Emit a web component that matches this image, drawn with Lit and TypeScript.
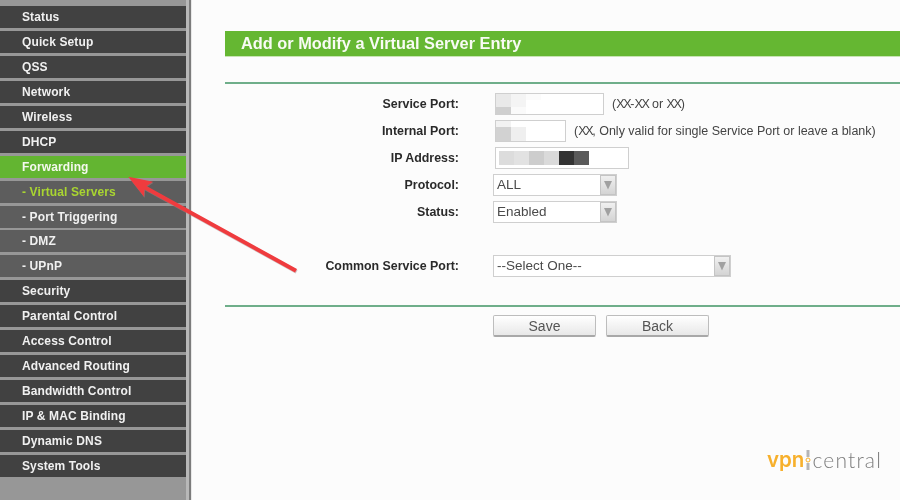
import { LitElement, html, css } from "lit";
import { customElement } from "lit/decorators.js";

type Item = { label: string; kind?: "active" | "sub" | "subactive" };
const MENU: Item[] = [
  { label: "Status" }, { label: "Quick Setup" }, { label: "QSS" }, { label: "Network" },
  { label: "Wireless" }, { label: "DHCP" }, { label: "Forwarding", kind: "active" },
  { label: "- Virtual Servers", kind: "subactive" }, { label: "- Port Triggering", kind: "sub" },
  { label: "- DMZ", kind: "sub" }, { label: "- UPnP", kind: "sub" }, { label: "Security" },
  { label: "Parental Control" }, { label: "Access Control" }, { label: "Advanced Routing" },
  { label: "Bandwidth Control" }, { label: "IP & MAC Binding" }, { label: "Dynamic DNS" },
  { label: "System Tools" },
];

const arrowBtn = html`<span class="drop"><svg width="10" height="10" viewBox="0 0 10 10"><path d="M1 1h8L5 9.500z" fill="#a0a0a0"/></svg></span>`;
const xx = html`<span class="xx">XX</span>`;

@customElement("app-root")
export class AppRoot extends LitElement {
  static styles = css`
    :host { display: block; width: 900px; height: 500px; overflow: hidden; position: relative;
      font-family: "Liberation Sans", Arial, sans-serif; background: #fcfcfc; filter: blur(0.4px); }
    .page { display: flex; height: 500px; }
    .side { width: 186px; flex: none; background: #979797; padding-top: 6px; box-sizing: border-box;
      display: flex; flex-direction: column; gap: 2.94px; }
    .stripe { width: 6px; flex: none; background: linear-gradient(90deg, #b8b8b8 0 3px, #7c7c7c 3px 5px, #e8e8e8 5px 6px); }
    .item { height: 22px; flex: none; background: #414141; color: #f0f0f0; font-size: 12px; font-weight: 700;
      line-height: 22px; padding-left: 22px; white-space: nowrap; letter-spacing: 0.12px; }
    .active { background: #63b531; color: #f4f8ee; }
    .sub { background: #5d5d5d; }
    .subactive { background: #5d5d5d; color: #a9d531; }
    .main { flex: 1; padding: 31px 0 0 33px; min-width: 0; }
    .title { height: 25px; background: #65b732; color: #f8fbf4; font-size: 16.350px; font-weight: 700; line-height: 24px;
      padding-left: 16px; box-shadow: 0 1px 0 #c8e4b4; }
    .rule { height: 2px; background: #6fae8a; }
    .r1 { margin-top: 26px; }
    .form { display: flex; flex-direction: column; margin-top: 6px; }
    .row { display: grid; grid-template-columns: 234px 1fr; column-gap: 36px; align-items: center; height: 27px; }
    .row.common { margin-top: 27px; }
    .lbl { font-size: 12.400px; font-weight: 700; color: #2a2a2a; text-align: right; }
    .ctl { display: flex; align-items: center; gap: 8px; }
    .box { height: 22px; box-sizing: border-box; background: #fff; border: 1px solid #cfcfcf; display: flex; flex: none; position: relative; overflow: hidden; }
    .hint { font-size: 12.500px; color: #444; white-space: nowrap; }
    .xx { letter-spacing: -1.300px; }
    .blur { display: flex; flex-direction: column; }
    .cell { width: 15px; height: 7px; }
    .sel { height: 22px; box-sizing: border-box; background: #fff; border: 1px solid #cfcfcf; display: flex; align-items: center;
      justify-content: space-between; padding: 0 0 0 3px; font-size: 13.500px; color: #4a4a4a; flex: none; margin-left: -2px; }
    .drop { width: 16px; height: 20px; border: 1px solid #c4c4c4; background: linear-gradient(#f0f0f0, #d4d4d4); box-sizing: border-box;
      display: flex; align-items: center; justify-content: center; }
    .btns { display: flex; gap: 10px; margin: 8px 0 0 268px; }
    .btn { width: 103px; height: 22px; box-sizing: border-box; border: 1px solid #bdbdbd; border-bottom: 2px solid #a8a8a8; border-radius: 2px;
      background: linear-gradient(#fff, #e8e8e8); font-size: 14px; color: #555; display: flex; align-items: center; justify-content: center; }
    .r2 { margin-top: 26px; }
    .arrow { position: absolute; left: 120px; top: 170px; }
    .logo { position: absolute; left: 767px; top: 448px; display: flex; align-items: center; line-height: 24px; }
    .vpn { color: #f7b02c; font-weight: 600; font-family: Inter, sans-serif; font-size: 20.500px; }
    .central { color: #7d7d7d; font-family: Lato, sans-serif; font-weight: 300; font-size: 21px; letter-spacing: 1.200px; }
    .mark { margin: 0; }
  `;

  private patch(cells: string[][]) {
    return html`<div style="display:flex">${cells.map(
      (col) => html`<div class="blur">${col.map((c) => html`<div class="cell" style="background:${c}"></div>`)}</div>`
    )}</div>`;
  }

  render() {
    return html`
      <div class="page">
        <nav class="side">
          ${MENU.map((m) => html`<div class="item ${m.kind ?? ""}">${m.label}</div>`)}
        </nav>
        <div class="stripe"></div>
        <main class="main">
          <div class="title">Add or Modify a Virtual Server Entry</div>
          <div class="rule r1"></div>
          <div class="form">
            <div class="row"><div class="lbl">Service Port:</div><div class="ctl">
              <div class="box" style="width:109px">${this.patch([["#e9e9e9", "#e9e9e9", "#cfcfcf"], ["#f4f4f4", "#f4f4f4", "#fafafa"], ["#fbfbfb", "#fff", "#fff"]])}</div>
              <span class="hint">(${xx}-${xx} or ${xx})</span></div></div>
            <div class="row"><div class="lbl">Internal Port:</div><div class="ctl">
              <div class="box" style="width:71px">${this.patch([["#f2f2f2", "#d2d2d2", "#d2d2d2"], ["#fff", "#efefef", "#efefef"]])}</div>
              <span class="hint">(${xx}, Only valid for single Service Port or leave a blank)</span></div></div>
            <div class="row"><div class="lbl">IP Address:</div><div class="ctl">
              <div class="box" style="width:134px;align-items:center;padding-left:3px">${this.patch([["#dcdcdc", "#dcdcdc"], ["#e2e2e2", "#e2e2e2"], ["#cdcdcd", "#cdcdcd"], ["#dadada", "#dadada"], ["#333", "#333"], ["#5a5a5a", "#5a5a5a"]])}</div></div></div>
            <div class="row"><div class="lbl">Protocol:</div><div class="ctl">
              <div class="sel" style="width:124px">ALL${arrowBtn}</div></div></div>
            <div class="row"><div class="lbl">Status:</div><div class="ctl">
              <div class="sel" style="width:124px">Enabled${arrowBtn}</div></div></div>
            <div class="row common"><div class="lbl">Common Service Port:</div><div class="ctl">
              <div class="sel" style="width:238px">--Select One--${arrowBtn}</div></div></div>
          </div>
          <div class="rule r2"></div>
          <div class="btns"><div class="btn">Save</div><div class="btn">Back</div></div>
        </main>
      </div>
      <svg class="arrow" width="190" height="110" viewBox="120 170 190 110">
        <path d="M128.300 176.700 L153 181.700 L146.500 186 L297 269 L295 272.500 L144.500 189.500 L144 196.700 Z" fill="#a88" opacity="0.5" transform="translate(0.6 1)"/>
        <path d="M128.300 176.700 L153 181.700 L146.500 186 L297 269 L295 272.500 L144.500 189.500 L144 196.700 Z" fill="#ef3b3e"/>
      </svg>
      <div class="logo"><span class="vpn">vpn</span>
        <svg class="mark" width="8" height="24" viewBox="0 0 8 24"><path d="M4 2v7M4 15v7" stroke="#b5b5b5" stroke-width="3"/><circle cx="4" cy="12" r="2" fill="none" stroke="#f7b02c"/></svg>
        <span class="central">central</span></div>
    `;
  }
}
